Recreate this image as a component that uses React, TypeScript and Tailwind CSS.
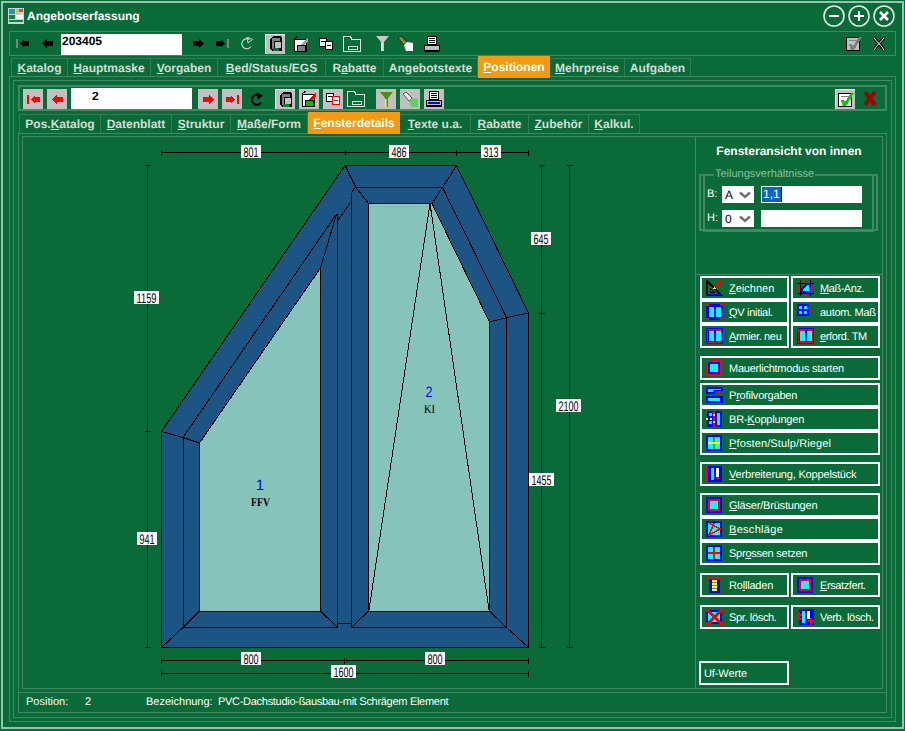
import type { ReactNode } from 'react'

const LINE = 'border-[#3f8a63]'
const TAB_LINE = 'border-[#2f7f55]'

/* ---------- small toolbar drawings ---------- */

function Svg({ w, h, children, className }: { w: number; h: number; children: ReactNode; className?: string }) {
  return (
    <svg width={w} height={h} viewBox={`0 0 ${w} ${h}`} shapeRendering="crispEdges" className={`shrink-0 ${className ?? ''}`}>
      {children}
    </svg>
  )
}

function Arrow({ dir, bar, color, barColor }: { dir: 'l' | 'r'; bar?: boolean; color: string; barColor?: string }) {
  const w = bar ? 13 : 11
  const flip = dir === 'r' ? `translate(${w} 0) scale(-1 1)` : undefined
  return (
    <Svg w={w} h={9}>
      <g transform={flip}>
        {bar && <rect x="0" y="0" width="2" height="9" fill={barColor ?? color} />}
        <polygon points={`${bar ? 4 : 0},4.5 ${bar ? 8 : 5},0 ${bar ? 8 : 5},2 ${w},2 ${w},7 ${bar ? 8 : 5},7 ${bar ? 8 : 5},9`} fill={color} />
      </g>
    </Svg>
  )
}

function Refresh({ color, fill }: { color: string; fill?: boolean }) {
  return (
    <svg width="14" height="13" viewBox="0 0 14 13" fill="none" className="shrink-0">
      <path d="M11 9.5A5 5 0 1 1 9.5 2.5" stroke={color} strokeWidth={fill ? 2.2 : 1.2} />
      <polygon points="7,0 12.5,2.5 8,6" fill={fill ? color : 'none'} stroke={color} strokeWidth="1" />
    </svg>
  )
}

function Cube({ a }: { a: string }) {
  return (
    <Svg w={14} h={16}>
      <polygon points="1,3 4,0 11,0 13,2 13,15 3,15 1,13" fill="#000" />
      <rect x="3" y="2" width="8" height="11" fill="#808080" />
      <rect x="5" y="5" width="7" height="7" fill="#c0c0c0" stroke="#000" />
      <rect x="4" y="12" width="6" height="3" fill={a} />
    </Svg>
  )
}

function Box({ a, b }: { a: string; b: string }) {
  return (
    <Svg w={16} h={16}>
      <rect x="1" y="3" width="12" height="12" fill="#fff" stroke="#000" />
      <polygon points="5,11 15,1 15,5 9,13 5,13" fill={a} />
      <rect x="4" y="9" width="8" height="6" fill={b} stroke="#000" />
      <line x1="1" y1="3" x2="5" y2="0" stroke="#000" />
    </Svg>
  )
}

function Pages({ c }: { c: string }) {
  return (
    <Svg w={14} h={12}>
      <rect x="0.5" y="0.5" width="7" height="8" fill="#fff" stroke="#000" />
      <rect x="6.5" y="3.5" width="7" height="8" fill="#fff" stroke={c} />
      <rect x="2" y="3" width="4" height="1" fill="#000" />
      <rect x="8" y="7" width="4" height="1" fill={c} />
    </Svg>
  )
}

function Folder() {
  return (
    <svg width="18" height="16" viewBox="0 0 18 16" fill="none" shapeRendering="crispEdges" className="shrink-0">
      <path d="M0.5 15.5V0.5H7.5L9 3.5H17.5V15.5Z" stroke="#d7e4dc" />
      <rect x="5.5" y="10.5" width="9" height="3" stroke="#d7e4dc" />
    </svg>
  )
}

function Funnel({ a, b }: { a: string; b: string }) {
  return (
    <svg width="13" height="15" viewBox="0 0 13 15" className="shrink-0">
      <polygon points="0,0 13,0 8,6 8,15 5,15 5,6" fill={a} />
      <rect x="5" y="7" width="1.5" height="8" fill={b} />
    </svg>
  )
}

function Lamp({ a, b }: { a: string; b: string }) {
  return (
    <svg width="15" height="15" viewBox="0 0 15 15" className="shrink-0">
      <polygon points="0,2 3,0 9,6 6,9" fill={a} stroke="#000" strokeWidth="0.6" />
      <polygon points="6,9 9,6 15,7 15,15 8,15" fill={b} />
    </svg>
  )
}

function Printer({ c }: { c: string }) {
  return (
    <Svg w={16} h={16}>
      <rect x="3.5" y="0.5" width="9" height="8" fill="#fff" stroke="#000" />
      <rect x="5" y="2" width="6" height="1" fill="#000" />
      <rect x="5" y="4" width="6" height="1" fill="#000" />
      <rect x="5" y="6" width="6" height="1" fill="#000" />
      <rect x="0.5" y="9.5" width="15" height="5" fill="#c0c0c0" stroke="#000" />
      <rect x="2" y="11" width="12" height="2" fill={c} />
      <rect x="0" y="15" width="16" height="1" fill="#000" />
    </Svg>
  )
}

function CheckSheet({ c, sheet = '#fff' }: { c: string; sheet?: string }) {
  return (
    <Svg w={16} h={15}>
      <rect x="0.5" y="1.5" width="13" height="13" fill={sheet} stroke="#000" strokeWidth="1.5" />
      <rect x="3" y="4" width="8" height="1" fill="#808080" />
      <polygon points="3,8 6,8 7,10 13,1 16,1 8,14 5,14" fill={c} />
    </Svg>
  )
}

function ToolBtn({ children, pressed }: { children: ReactNode; pressed?: boolean }) {
  return (
    <div
      className={`flex w-[20px] h-[20px] shrink-0 items-center justify-center bg-[#c0c0c0] ${pressed ? 'border-t border-l border-[#f0f0f0]' : ''}`}
    >
      {children}
    </div>
  )
}

/* ---------- side button icons (17x16) ---------- */

const B = '#0000ff'
const C = '#00ffff'
const R = '#ff0000'
const Y = '#ffff00'

function Ico({ children }: { children: ReactNode }) {
  return <Svg w={17} h={16}>{children}</Svg>
}

function TwoPanes({ red }: { red?: boolean }) {
  return (
    <>
      <rect x="0" y="0" width="17" height="16" fill={B} />
      {red && <rect x="1" y="1" width="15" height="14" fill={R} />}
      <rect x="3" y="3" width="5" height="10" fill={C} />
      <rect x="10" y="3" width="5" height="10" fill={C} />
      <rect x="8" y="2" width="2" height="12" fill={B} />
      {red && <rect x="2" y="2" width="1" height="12" fill={B} />}
    </>
  )
}

const icons: Record<string, ReactNode> = {
  zeichnen: (
    <Ico>
      <polygon points="1,1 1,15 15,15" fill="none" stroke="#000" strokeWidth="1.5" />
      <polygon points="4,8 4,12 8,12" fill="none" stroke="#000" />
      <rect x="1" y="14" width="15" height="1" fill={B} />
      <polygon points="8,7 14,0 16,2 10,9" fill={R} />
      <polygon points="7,9 8,7 10,9" fill={Y} />
    </Ico>
  ),
  mass: (
    <Ico>
      <rect x="3" y="0" width="1" height="16" fill="#000" />
      <rect x="13" y="0" width="1" height="16" fill="#000" />
      <rect x="0" y="3" width="17" height="1" fill="#000" />
      <rect x="0" y="13" width="17" height="1" fill="#000" />
      <polygon points="4,13 4,8 9,3 14,3 14,13" fill={B} />
      <polygon points="6,11 6,9 10,5 12,5 12,11" fill={C} />
      <rect x="0" y="6" width="2" height="5" fill={R} />
      <rect x="15" y="6" width="2" height="3" fill={R} />
      <rect x="6" y="0" width="3" height="2" fill={R} />
      <rect x="7" y="14" width="4" height="2" fill={R} />
    </Ico>
  ),
  qv: (
    <Ico>
      <TwoPanes />
      <rect x="0" y="0" width="3" height="2" fill={R} />
      <rect x="14" y="0" width="3" height="2" fill={R} />
      <rect x="0" y="14" width="3" height="2" fill={R} />
      <rect x="14" y="14" width="3" height="2" fill={R} />
    </Ico>
  ),
  armier: <Ico><TwoPanes red /></Ico>,
  autom: (
    <Ico>
      <rect x="0" y="0" width="12" height="12" fill={B} />
      <rect x="2" y="2" width="3" height="3" fill={C} />
      <rect x="7" y="2" width="3" height="3" fill={C} />
      <rect x="2" y="7" width="3" height="3" fill={C} />
      <rect x="7" y="7" width="3" height="3" fill={C} />
      <rect x="13" y="6" width="4" height="1" fill={R} />
      <rect x="6" y="13" width="1" height="3" fill={R} />
    </Ico>
  ),
  mauer: (
    <Ico>
      <polygon points="0,4 4,0 16,0 16,16 0,16" fill={R} />
      <rect x="2" y="2" width="12" height="12" fill={B} />
      <rect x="4" y="4" width="8" height="8" fill={C} />
    </Ico>
  ),
  profil: (
    <Ico>
      <polygon points="0,0 17,0 17,4 9,4 9,7 0,7" fill={B} />
      <polygon points="2,2 15,2 15,3 7,3 7,5 2,5" fill={C} />
      <rect x="0" y="9" width="17" height="7" fill={B} />
      <rect x="2" y="11" width="12" height="3" fill={C} />
      <rect x="12" y="5" width="2" height="3" fill={R} />
    </Ico>
  ),
  br: (
    <Ico>
      <rect x="1" y="0" width="15" height="16" fill={B} />
      <rect x="3" y="2" width="3" height="3" fill={C} />
      <rect x="3" y="10" width="3" height="3" fill={C} />
      <rect x="11" y="2" width="3" height="12" fill={C} />
      <rect x="7" y="0" width="2" height="16" fill={R} />
      <rect x="0" y="7" width="2" height="2" fill={Y} />
      <rect x="4" y="7" width="2" height="2" fill={Y} />
      <rect x="7" y="3" width="2" height="2" fill={Y} />
      <rect x="7" y="10" width="2" height="2" fill={Y} />
    </Ico>
  ),
  pfosten: (
    <Ico>
      <rect x="0" y="0" width="16" height="16" fill={B} />
      <rect x="2" y="2" width="12" height="12" fill={C} />
      <rect x="7" y="2" width="2" height="12" fill="#808000" />
      <rect x="2" y="7" width="12" height="2" fill={Y} />
    </Ico>
  ),
  verbreit: (
    <Ico>
      <rect x="2" y="0" width="14" height="16" fill={B} />
      <rect x="0" y="0" width="2" height="16" fill={R} />
      <rect x="5" y="2" width="3" height="12" fill={C} />
      <rect x="10" y="2" width="3" height="10" fill="#fff" />
      <rect x="10" y="11" width="3" height="2" fill={R} />
    </Ico>
  ),
  glas: (
    <Ico>
      <rect x="0" y="0" width="16" height="16" fill={B} />
      <rect x="2" y="2" width="12" height="12" fill={R} />
      <rect x="4" y="4" width="8" height="8" fill={C} />
    </Ico>
  ),
  beschlag: (
    <Ico>
      <rect x="0" y="0" width="16" height="16" fill={B} />
      <rect x="2" y="2" width="12" height="12" fill={C} />
      <polyline points="3,2 14,8 3,14 8,2" fill="none" stroke={R} strokeWidth="1.5" />
    </Ico>
  ),
  sprosse: (
    <Ico>
      <rect x="0" y="0" width="16" height="16" fill={B} />
      <rect x="2" y="2" width="12" height="12" fill={C} />
      <rect x="7" y="2" width="2" height="12" fill={R} />
      <rect x="2" y="7" width="12" height="2" fill={R} />
    </Ico>
  ),
  roll: (
    <Ico>
      <rect x="3" y="2" width="11" height="14" fill={B} />
      <rect x="0" y="0" width="16" height="2" fill={R} />
      <rect x="6" y="3" width="5" height="11" fill={Y} />
      <rect x="6" y="5" width="5" height="1" fill="#808080" />
      <rect x="6" y="8" width="5" height="1" fill="#808080" />
      <rect x="6" y="11" width="5" height="1" fill="#808080" />
      <rect x="15" y="14" width="2" height="2" fill={R} />
    </Ico>
  ),
  sprl: (
    <Ico>
      <rect x="0" y="1" width="16" height="14" fill={B} />
      <rect x="2" y="3" width="12" height="10" fill={C} />
      <line x1="0" y1="0" x2="17" y2="16" stroke={R} strokeWidth="3" />
      <line x1="17" y1="0" x2="0" y2="16" stroke={R} strokeWidth="3" />
    </Ico>
  ),
  verbl: (
    <Ico>
      <rect x="2" y="0" width="15" height="16" fill={B} />
      <rect x="5" y="2" width="3" height="12" fill={C} />
      <rect x="10" y="2" width="3" height="8" fill="#fff" />
      <rect x="0" y="5" width="5" height="2" fill={R} />
      <rect x="1" y="3" width="2" height="8" fill={R} />
      <rect x="0" y="9" width="5" height="2" fill={R} />
      <rect x="11" y="11" width="6" height="2" fill={R} />
      <rect x="13" y="9" width="2" height="7" fill={R} />
    </Ico>
  ),
}

function SideBtn({ icon, children, wide, fit = 'tracking-[-0.3px]' }: { icon: string; children: ReactNode; wide?: boolean; fit?: string }) {
  return (
    <div
      className={`flex h-[24px] items-center gap-[6px] border-2 border-white pl-[4px] text-[11px] whitespace-nowrap text-white ${wide ? 'col-span-2' : ''}`}
    >
      {icons[icon]}
      <span className={`pt-[2px] ${fit}`}>{children}</span>
    </div>
  )
}

/* ---------- the window drawing ---------- */

const FRAME = '#1c5583'
const GLASS = '#86c3ba'

const lines: number[][] = [
  [345, 165.5, 356, 187.5],
  [456.5, 165.5, 442.5, 187.5],
  [356, 187.5, 442.5, 187.5],
  [355, 188, 351.5, 192.5],
  [356, 187.5, 368.5, 203.5],
  [442.5, 187.5, 432, 203.5],
  [442.5, 187.5, 506.5, 317.5],
  [351.5, 192.5, 351.5, 627.5],
  [506.5, 317.5, 506.5, 627.5],
  [528.5, 313, 506.5, 317.5],
  [506.5, 317.5, 489.5, 322],
  [161.5, 431.5, 183, 437.5],
  [183, 437.5, 199.5, 443],
  [183, 437.5, 183, 627.5],
  [183, 437.5, 336.5, 214],
  [336.5, 214, 320.5, 268],
  [337.5, 214, 337.5, 627.5],
  [351, 202, 338, 220],
  [183, 627.5, 337.5, 627.5],
  [351.5, 627.5, 506.5, 627.5],
  [337.5, 623.5, 351.5, 623.5],
  [161.5, 647.5, 183, 627.5],
  [528.5, 647.5, 506.5, 627.5],
  [183, 627.5, 199.5, 611],
  [320.5, 611, 337.5, 627.5],
  [351.5, 627.5, 368.5, 611],
  [489.5, 611, 506.5, 627.5],
  [430, 203.5, 369, 610],
  [430, 203.5, 489, 610],
]

// dimension lines: horizontal [y, x1, x2, ticks], vertical [x, y1, y2, ticks]
const hDims = [
  { y: 152.5, x1: 161.5, x2: 528.5, ticks: [161.5, 345, 456.5, 528.5] },
  { y: 660.5, x1: 161.5, x2: 528.5, ticks: [161.5, 344.5, 528.5] },
  { y: 673.5, x1: 161.5, x2: 528.5, ticks: [161.5, 528.5] },
]
const vDims = [
  { x: 147.5, ticks: [165.5, 431.5, 647.5] },
  { x: 541.5, ticks: [165.5, 313.5, 647.5] },
  { x: 569.5, ticks: [165.5, 647.5] },
]

const labels = [
  { t: '801', x: 241, y: 145, w: 20 },
  { t: '486', x: 389, y: 145, w: 20 },
  { t: '313', x: 481, y: 145, w: 20 },
  { t: '1159', x: 134, y: 291, w: 25 },
  { t: '941', x: 137, y: 532, w: 20 },
  { t: '645', x: 531, y: 232, w: 20 },
  { t: '2100', x: 556, y: 399, w: 25 },
  { t: '1455', x: 529, y: 473, w: 25 },
  { t: '800', x: 241, y: 652, w: 20 },
  { t: '800', x: 425, y: 652, w: 20 },
  { t: '1600', x: 331, y: 665, w: 25 },
]

function WindowDrawing() {
  return (
    <svg width="672" height="551" viewBox="23 137 672 551" className="block shrink-0" fontFamily="'Liberation Sans', sans-serif">
      <g shapeRendering="crispEdges" stroke="#000" strokeWidth="1">
        <polygon points="345,165.5 456.5,165.5 528.5,313 528.5,647.5 161.5,647.5 161.5,431.5" fill={FRAME} />
        <polygon points="199.5,443 320.5,268 320.5,611 199.5,611" fill={GLASS} />
        <polygon points="368.5,203.5 432,203.5 489.5,322 489.5,611 368.5,611" fill={GLASS} />
        {lines.map((l, i) => (
          <line key={i} x1={l[0]} y1={l[1]} x2={l[2]} y2={l[3]} />
        ))}
        {hDims.map((d, i) => (
          <g key={i}>
            <line x1={d.x1} y1={d.y} x2={d.x2} y2={d.y} />
            {d.ticks.map((t) => (
              <line key={t} x1={t} y1={d.y - 3} x2={t} y2={d.y + 3} />
            ))}
          </g>
        ))}
        {vDims.map((d, i) => (
          <g key={i}>
            <line x1={d.x} y1={165.5} x2={d.x} y2={647.5} />
            {d.ticks.map((t) => (
              <line key={t} x1={d.x - 3} y1={t} x2={d.x + 3} y2={t} />
            ))}
          </g>
        ))}
      </g>
      {labels.map((l, i) => (
        <g key={i}>
          <rect x={l.x} y={l.y} width={l.w} height={13} fill="#fff" />
          <text
            x={l.x + l.w / 2}
            y={l.y + 11.5}
            fontSize="14"
            textAnchor="middle"
            textLength={l.w - 5}
            lengthAdjust="spacingAndGlyphs"
            fill="#000"
          >
            {l.t}
          </text>
        </g>
      ))}
      <text x="260" y="490" fontSize="15" textAnchor="middle" fill="#0000ff">1</text>
      <text x="429" y="396.5" fontSize="15" textAnchor="middle" fill="#0000ff" textLength="7" lengthAdjust="spacingAndGlyphs">2</text>
      <text x="260.5" y="506" fontSize="12" fontWeight="700" fontFamily="'Liberation Serif', serif" textAnchor="middle" textLength="19" lengthAdjust="spacingAndGlyphs">FFV</text>
      <text x="429.5" y="413" fontSize="12" fontFamily="'Liberation Serif', serif" textAnchor="middle" textLength="11" lengthAdjust="spacingAndGlyphs">KI</text>
    </svg>
  )
}

/* ---------- tabs ---------- */

type Tab = { w: string; label: ReactNode; active?: boolean }

const mainTabs: Tab[] = [
  { w: 'w-[56px]', label: <><u>K</u>atalog</> },
  { w: 'w-[83px]', label: <><u>H</u>auptmaske</> },
  { w: 'w-[67px]', label: <><u>V</u>orgaben</> },
  { w: 'w-[108px]', label: <><u>B</u>ed/Status/EGS</> },
  { w: 'w-[58px]', label: <>R<u>a</u>batte</> },
  { w: 'w-[94px]', label: <>Angebotstexte</> },
  { w: 'w-[72px]', label: <><u>P</u>ositionen</>, active: true },
  { w: 'w-[75px]', label: <><u>M</u>ehrpreise</> },
  { w: 'w-[66px]', label: <>Aufgaben</> },
]

const subTabs: Tab[] = [
  { w: 'w-[81px]', label: <>Pos.<u>K</u>atalog</> },
  { w: 'w-[71px]', label: <><u>D</u>atenblatt</> },
  { w: 'w-[59px]', label: <><u>S</u>truktur</> },
  { w: 'w-[77px]', label: <><u>M</u>aße/Form</> },
  { w: 'w-[92px]', label: <><u>F</u>ensterdetails</>, active: true },
  { w: 'w-[71px]', label: <><u>T</u>exte u.a.</> },
  { w: 'w-[58px]', label: <><u>R</u>abatte</> },
  { w: 'w-[60px]', label: <><u>Z</u>ubehör</> },
  { w: 'w-[51px]', label: <><u>K</u>alkul.</> },
]

function TabRow({ tabs, height }: { tabs: Tab[]; height: string }) {
  return (
    <div className={`relative z-10 flex items-start self-start border-l ${TAB_LINE} ${height}`}>
      {tabs.map((t, i) =>
        t.active ? (
          <div key={i} className={`-mt-[2px] flex h-[22px] shrink-0 items-center justify-center bg-[#f39a12] text-[12px] font-bold text-white ${t.w}`}>
            <span>{t.label}</span>
          </div>
        ) : (
          <div key={i} className={`flex h-full shrink-0 items-center justify-center border-t border-r ${TAB_LINE} text-[12px] font-bold text-[#d5ddd7] ${t.w}`}>
            <span>{t.label}</span>
          </div>
        ),
      )}
    </div>
  )
}

function RoundBtn({ children }: { children: ReactNode }) {
  return (
    <svg width="22" height="22" viewBox="0 0 22 22" fill="none" stroke="#fff" className="shrink-0">
      <circle cx="11" cy="11" r="10" stroke="#dfe9e3" strokeWidth="1.6" />
      {children}
    </svg>
  )
}

function SelectBox({ value }: { value: string }) {
  return (
    <div className="flex h-[17px] w-[32px] items-center justify-between bg-white pl-[3px] pr-[3px] text-[12px] text-black">
      <span>{value}</span>
      <svg width="12" height="8" viewBox="0 0 12 8" fill="none" className="shrink-0">
        <path d="M1 1.5L6 6L11 1.5" stroke="#707070" strokeWidth="2.4" />
      </svg>
    </div>
  )
}

export default function App() {
  return (
    <div className="h-[731px] w-[905px] overflow-hidden bg-[#0a6b38] p-px font-['Liberation_Sans',sans-serif] text-white [text-rendering:geometricPrecision]">
      <div className="flex h-[728px] flex-col border-2 border-[#9dbfae] px-[6px]">
        {/* Title */}
        <div className="flex h-[27px] shrink-0 items-center pb-[2px]">
          <svg width="16" height="16" viewBox="0 0 16 16" shapeRendering="crispEdges" className="-ml-px shrink-0">
            <rect width="16" height="16" fill="#c8d8d0" />
            <rect x="1" y="1" width="6" height="5" fill="#2f8fb0" />
            <rect x="8" y="1" width="3" height="5" fill="#e0c040" />
            <rect x="11" y="1" width="4" height="3" fill="#d04060" />
            <rect x="1" y="7" width="6" height="4" fill="#108050" />
            <rect x="8" y="7" width="7" height="4" fill="#fff" />
            <rect x="1" y="12" width="14" height="2" fill="#108050" />
          </svg>
          <span className="ml-[3px] text-[12px] font-bold">Angebotserfassung</span>
          <div className="mr-[1px] ml-auto flex gap-[3px]">
            <RoundBtn><path d="M6 11H16" strokeWidth="2" /></RoundBtn>
            <RoundBtn><path d="M6 11H16M11 6V16" strokeWidth="2" /></RoundBtn>
            <RoundBtn><path d="M7 7L15 15M15 7L7 15" strokeWidth="2.6" /></RoundBtn>
          </div>
        </div>

        {/* Main toolbar */}
        <div className={`mt-px flex h-[25px] shrink-0 items-center border ${LINE}`}>
          <div className="ml-[6px]"><Arrow dir="l" bar color="#000" barColor="#808080" /></div>
          <div className="ml-[13px]"><Arrow dir="l" color="#000" /></div>
          <div className="ml-[8px] h-[21px] w-[121px] self-end bg-white pl-px text-[12px] leading-[15px] font-bold text-black">203405</div>
          <div className="ml-[11px]"><Arrow dir="r" color="#000" /></div>
          <div className="ml-[12px]"><Arrow dir="r" bar color="#000" barColor="#808080" /></div>
          <div className="ml-[11px]"><Refresh color="#c8d8ce" /></div>
          <div className="ml-[11px]"><ToolBtn pressed><Cube a="#0a6b38" /></ToolBtn></div>
          <div className="ml-[8px]"><Box a="#a0a0a0" b="#808080" /></div>
          <div className="ml-[10px]"><Pages c="#000" /></div>
          <div className="ml-[10px]"><Folder /></div>
          <div className="ml-[15px]"><Funnel a="#c8c8c8" b="#f0f0f0" /></div>
          <div className="ml-[9px]"><Lamp a="#8a8040" b="#fff" /></div>
          <div className="ml-[11px]"><Printer c="#c0c0c0" /></div>
          <div className="ml-auto"><CheckSheet c="#808080" sheet="#c0c0c0" /></div>
          <svg width="16" height="16" viewBox="0 0 16 16" fill="none" className="mr-[8px] ml-[9px] shrink-0">
            <path d="M3 2C6 6 10 9 13 14M13 2C10 6 6 9 3 14" stroke="#000" strokeWidth="3" />
            <path d="M3 2C6 6 10 9 13 14M13 2C10 6 6 9 3 14" stroke="#fff" strokeWidth="1" />
          </svg>
        </div>

        {/* Main tabs */}
        <div className="ml-[2px] mt-[2px] flex shrink-0">
          <TabRow tabs={mainTabs} height="h-[18px]" />
        </div>

        {/* Main tab panel */}
        <div className={`h-[646px] shrink-0 border ${LINE} p-[3px]`}>
          <div className={`flex h-full flex-col border ${LINE} px-[4px] pt-[4px]`}>
            {/* Position toolbar */}
            <div className={`flex h-[26px] shrink-0 items-end border-2 ${LINE}`}>
              <div className="ml-[3px]"><ToolBtn><Arrow dir="l" bar color="#ff0000" /></ToolBtn></div>
              <div className="ml-[4px]"><ToolBtn><Arrow dir="l" color="#ff0000" /></ToolBtn></div>
              <div className="ml-[4px] h-[21px] w-[121px] bg-white pl-[21px] text-[12px] leading-[17px] font-bold text-black">2</div>
              <div className="ml-[6px]"><ToolBtn><Arrow dir="r" color="#ff0000" /></ToolBtn></div>
              <div className="ml-[4px]"><ToolBtn><Arrow dir="r" bar color="#ff0000" /></ToolBtn></div>
              <div className="mb-[3px] ml-[8px]"><Refresh color="#000" fill /></div>
              <div className="ml-[11px]"><ToolBtn pressed><Cube a="#0a8a30" /></ToolBtn></div>
              <div className="ml-[4px]"><ToolBtn><Box a="#ff0000" b="#00c000" /></ToolBtn></div>
              <div className="ml-[4px]"><ToolBtn><Pages c="#ff0000" /></ToolBtn></div>
              <div className="mb-[2px] ml-[4px]"><Folder /></div>
              <div className="ml-[11px]"><ToolBtn><Funnel a="#4f8f10" b="#ffff00" /></ToolBtn></div>
              <div className="ml-[4px]"><ToolBtn><Lamp a="#e8e8e8" b="#60d060" /></ToolBtn></div>
              <div className="ml-[4px]"><ToolBtn><Printer c="#0000ff" /></ToolBtn></div>
              <div className="ml-auto"><ToolBtn pressed><CheckSheet c="#00d000" /></ToolBtn></div>
              <svg width="14" height="15" viewBox="0 0 14 15" className="mr-[8px] mb-[3px] ml-[8px] shrink-0">
                <path d="M2 1L12 14M12 1L2 14" stroke="#a00000" strokeWidth="4" />
              </svg>
            </div>

            {/* Position tabs */}
            <div className="ml-[1px] mt-[3px] flex shrink-0">
              <TabRow tabs={subTabs} height="h-[19px]" />
            </div>

            {/* Detail frame */}
            <div className={`flex h-[580px] shrink-0 flex-col border ${LINE}`}>
              <div className={`mx-[3px] mt-[2px] flex h-[553px] shrink-0 border ${LINE}`}>
                <WindowDrawing />

                <div className={`flex min-w-0 flex-1 flex-col border-l ${LINE}`}>
                  <div className="h-[37px] shrink-0 pt-[6px] text-center text-[12px] leading-[16px] font-bold">
                    Fensteransicht von innen
                  </div>

                  {/* Teilungsverhaeltnisse */}
                  <div className={`relative ml-[3px] h-[57px] w-[179px] shrink-0 border-2 ${LINE} px-[2px]`}>
                    <span className="absolute top-[-8px] left-[13px] bg-[#0a6b38] px-[1px] text-[11px] leading-[13px] whitespace-nowrap text-[#8fbfa5]">
                      Teilungsverhältnisse
                    </span>
                    <div className={`h-[56px] border-2 border-t-0 ${LINE} pl-[2px] pt-[10px] text-[11px]`}>
                      <div className="flex h-[17px] items-center">
                        <span className="w-[15px]">B:</span>
                        <SelectBox value="A" />
                        <div className="ml-[7px] flex h-[17px] w-[101px] items-center bg-white text-[12px] text-black">
                          <span className="ml-[1px] bg-[#0a64c8] px-px leading-[15px] text-white">1,1</span>
                          <span className="h-[15px] w-px bg-black" />
                        </div>
                      </div>
                      <div className="mt-[7px] flex h-[17px] items-center">
                        <span className="w-[15px]">H:</span>
                        <SelectBox value="0" />
                        <div className="ml-[7px] h-[17px] w-[101px] bg-white" />
                      </div>
                    </div>
                  </div>

                  <div className={`mt-[43px] h-px shrink-0 border-t ${LINE}`} />

                  <div className="ml-[4px] w-[180px] pt-px">
                    <div className="grid grid-cols-2 gap-x-[2px]">
                      <SideBtn icon="zeichnen" fit="tracking-normal"><u>Z</u>eichnen</SideBtn>
                      <SideBtn icon="mass" fit="tracking-[-0.45px]"><u>M</u>aß-Anz.</SideBtn>
                      <SideBtn icon="qv"><u>Q</u>V initial.</SideBtn>
                      <SideBtn icon="autom">autom. Maß</SideBtn>
                      <SideBtn icon="armier" fit="tracking-[-0.35px]"><u>A</u>rmier. neu</SideBtn>
                      <SideBtn icon="armier" fit="tracking-[-0.37px]"><u>e</u>rford. TM</SideBtn>
                    </div>

                    <div className="mt-[8px] grid">
                      <SideBtn icon="mauer" wide fit="tracking-[-0.24px]">Mauerlichtmodus starten</SideBtn>
                    </div>

                    <div className="mt-[3px] grid">
                      <SideBtn icon="profil" wide fit="tracking-[-0.2px]">P<u>r</u>ofilvorgaben</SideBtn>
                      <SideBtn icon="br" wide fit="tracking-[-0.2px]">BR-<u>K</u>opplungen</SideBtn>
                      <SideBtn icon="pfosten" wide fit="tracking-[0.12px]"><u>P</u>fosten/Stulp/Riegel</SideBtn>
                    </div>

                    <div className="mt-[7px] grid">
                      <SideBtn icon="verbreit" wide fit="tracking-[-0.18px]"><u>V</u>erbreiterung, Koppelstück</SideBtn>
                    </div>

                    <div className="mt-[7px] grid">
                      <SideBtn icon="glas" wide fit="tracking-[-0.2px]"><u>G</u>läser/Brüstungen</SideBtn>
                      <SideBtn icon="beschlag" wide fit="tracking-[0.3px]"><u>B</u>eschläge</SideBtn>
                      <SideBtn icon="sprosse" wide fit="tracking-[-0.25px]">Spr<u>o</u>ssen setzen</SideBtn>
                    </div>

                    <div className="mt-[8px] grid grid-cols-2 gap-x-[2px]">
                      <SideBtn icon="roll" fit="tracking-[-0.2px]">Ro<u>l</u>lladen</SideBtn>
                      <SideBtn icon="glas" fit="tracking-[-0.4px]"><u>E</u>rsatzfert.</SideBtn>
                    </div>

                    <div className="mt-[8px] grid grid-cols-2 gap-x-[2px]">
                      <SideBtn icon="sprl" fit="tracking-[-0.35px]">Spr. lösch.</SideBtn>
                      <SideBtn icon="verbl">Verb. lösch.</SideBtn>
                    </div>

                    <div className="-ml-px mt-[32px] flex h-[24px] w-[90px] items-center border-2 border-white pl-[3px] pt-[2px] text-[11px] tracking-[-0.1px]">
                      Uf-Werte
                    </div>
                  </div>
                </div>
              </div>

              {/* Status */}
              <div className={`mt-[3px] flex flex-1 items-center border-t ${LINE} pl-[7px] text-[11px] whitespace-nowrap`}>
                <span className="w-[59px]">Position:</span>
                <span className="w-[61px]">2</span>
                <span className="w-[72px]">Bezeichnung:</span>
                <span className="tracking-[-0.29px]">PVC-Dachstudio-ßausbau-mit Schrägem Element</span>
              </div>
            </div>
          </div>
        </div>
      </div>
    </div>
  )
}
